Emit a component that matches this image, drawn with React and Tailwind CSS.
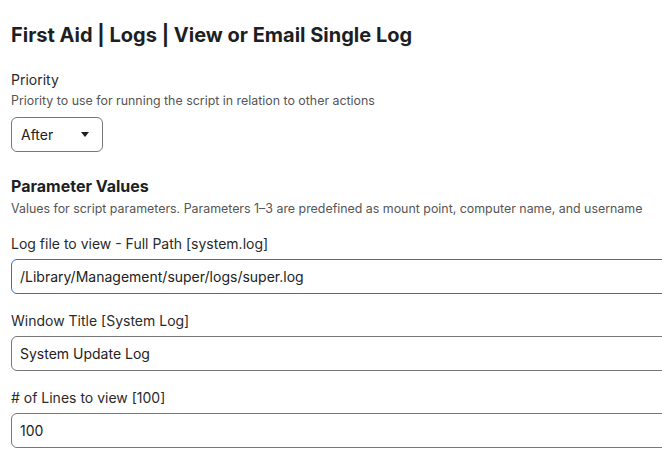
export default function App() {
  const params = [
    { label: 'Log file to view - Full Path [system.log]', value: '/Library/Management/super/logs/super.log', focused: true },
    { label: 'Window Title [System Log]', value: 'System Update Log' },
    { label: '# of Lines to view [100]', value: '100' },
  ]

  return (
    <div className="w-[662px] h-[460px] overflow-hidden bg-white pl-[11px] pt-[22px] font-['Inter',sans-serif] text-[#222]">
      <h1 className="text-[20px] leading-[26px] font-bold text-[#1d1f23]">First Aid | Logs | View or Email Single Log</h1>

      {/* Priority */}
      <div className="mt-[22px]">
        <div className="text-[14px] leading-[20px] text-[#2a2a2a]">Priority</div>
        <div className="mt-[3px] text-[12.4px] leading-[16px] text-[#555]">Priority to use for running the script in relation to other actions</div>
        <div className="mt-[8px] w-[92px] h-[35px] rounded-[6px] border border-[#777] flex items-center justify-between pl-[9px] pr-[13px] text-[14px] text-[#222]">
          <span>After</span>
          <svg width="8" height="5" viewBox="0 0 8 5"><path d="M0 0h8L4 5z" fill="#1d1f23" /></svg>
        </div>
      </div>

      {/* Parameters */}
      <div className="mt-[24px]">
        <h2 className="text-[16px] leading-[20px] font-bold text-[#1d1f23]">Parameter Values</h2>
        <div className="mt-[5px] text-[12.4px] leading-[16px] text-[#555]">Values for script parameters. Parameters 1–3 are predefined as mount point, computer name, and username</div>

        {params.map((p, i) => (
          <div key={i} className="mt-[17px]">
            <div className="text-[14px] leading-[20px] text-[#2a2a2a]">{p.label}</div>
            <div
              className={`mt-[5px] w-[720px] h-[35px] rounded-[6px] border flex items-center pl-[8px] text-[14px] text-[#222] ${
                p.focused ? 'border-[#2f6ee0]' : 'border-[#777]'
              }`}
            >
              {p.value}
            </div>
          </div>
        ))}
      </div>
    </div>
  )
}
